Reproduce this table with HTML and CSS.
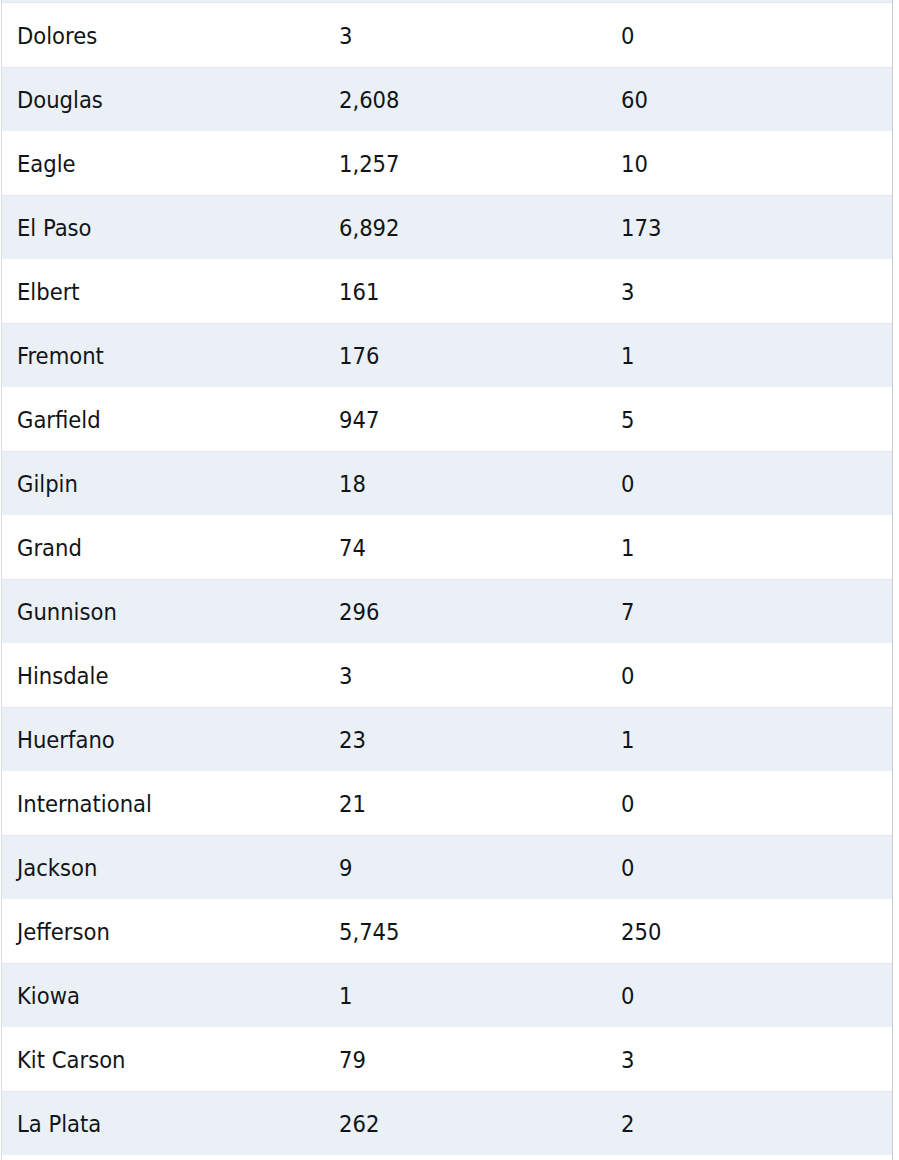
FILE: index.html
```html
<!DOCTYPE html>
<html>
<head>
<meta charset="utf-8">
<link rel="stylesheet" href="styles.css">
</head>
<body>
<div class="wrap">
  <div class="tail"></div>
  <table class="data">
    <colgroup><col class="c1"><col class="c2"><col class="c3"></colgroup>
    <tbody>
      <tr><td>Dolores</td><td>3</td><td>0</td></tr>
      <tr><td>Douglas</td><td>2,608</td><td>60</td></tr>
      <tr><td>Eagle</td><td>1,257</td><td>10</td></tr>
      <tr><td>El Paso</td><td>6,892</td><td>173</td></tr>
      <tr><td>Elbert</td><td>161</td><td>3</td></tr>
      <tr><td>Fremont</td><td>176</td><td>1</td></tr>
      <tr><td>Garfield</td><td>947</td><td>5</td></tr>
      <tr><td>Gilpin</td><td>18</td><td>0</td></tr>
      <tr><td>Grand</td><td>74</td><td>1</td></tr>
      <tr><td>Gunnison</td><td>296</td><td>7</td></tr>
      <tr><td>Hinsdale</td><td>3</td><td>0</td></tr>
      <tr><td>Huerfano</td><td>23</td><td>1</td></tr>
      <tr><td>International</td><td>21</td><td>0</td></tr>
      <tr><td>Jackson</td><td>9</td><td>0</td></tr>
      <tr><td>Jefferson</td><td>5,745</td><td>250</td></tr>
      <tr><td>Kiowa</td><td>1</td><td>0</td></tr>
      <tr><td>Kit Carson</td><td>79</td><td>3</td></tr>
      <tr><td>La Plata</td><td>262</td><td>2</td></tr>
      <tr class="empty"><td></td><td></td><td></td></tr>
    </tbody>
  </table>
</div>
</body>
</html>
```
FILE: styles.css
```css
html, body {
  margin: 0;
  padding: 0;
  background: #ffffff;
}
.wrap {
  margin-left: 1px;
  width: 890px;
  border-left: 1px solid #d9dee3;
  border-right: 1px solid #c9cdd1;
  height: 1160px;
  overflow: hidden;
}
.tail {
  height: 2px;
  background: #eaf0f5;
  border-bottom: 1px solid #e2e8ee;
}
.data {
  width: 890px;
  border-collapse: collapse;
  table-layout: fixed;
  font-family: "DejaVu Sans Condensed", "DejaVu Sans", sans-serif;
  font-stretch: condensed;
  font-size: 23.5px;
  color: #111418;
}
.c1 { width: 322px; }
.c2 { width: 282px; }
.data td {
  height: 64px;
  padding: 2px 0 0 15px;
  box-sizing: border-box;
  vertical-align: middle;
  white-space: nowrap;
}
.data tr:nth-child(even) td {
  background: #eaf0f5;
}
.data tr:nth-child(even) {
  border-top: 1px solid #e2e8ee;
}
```
